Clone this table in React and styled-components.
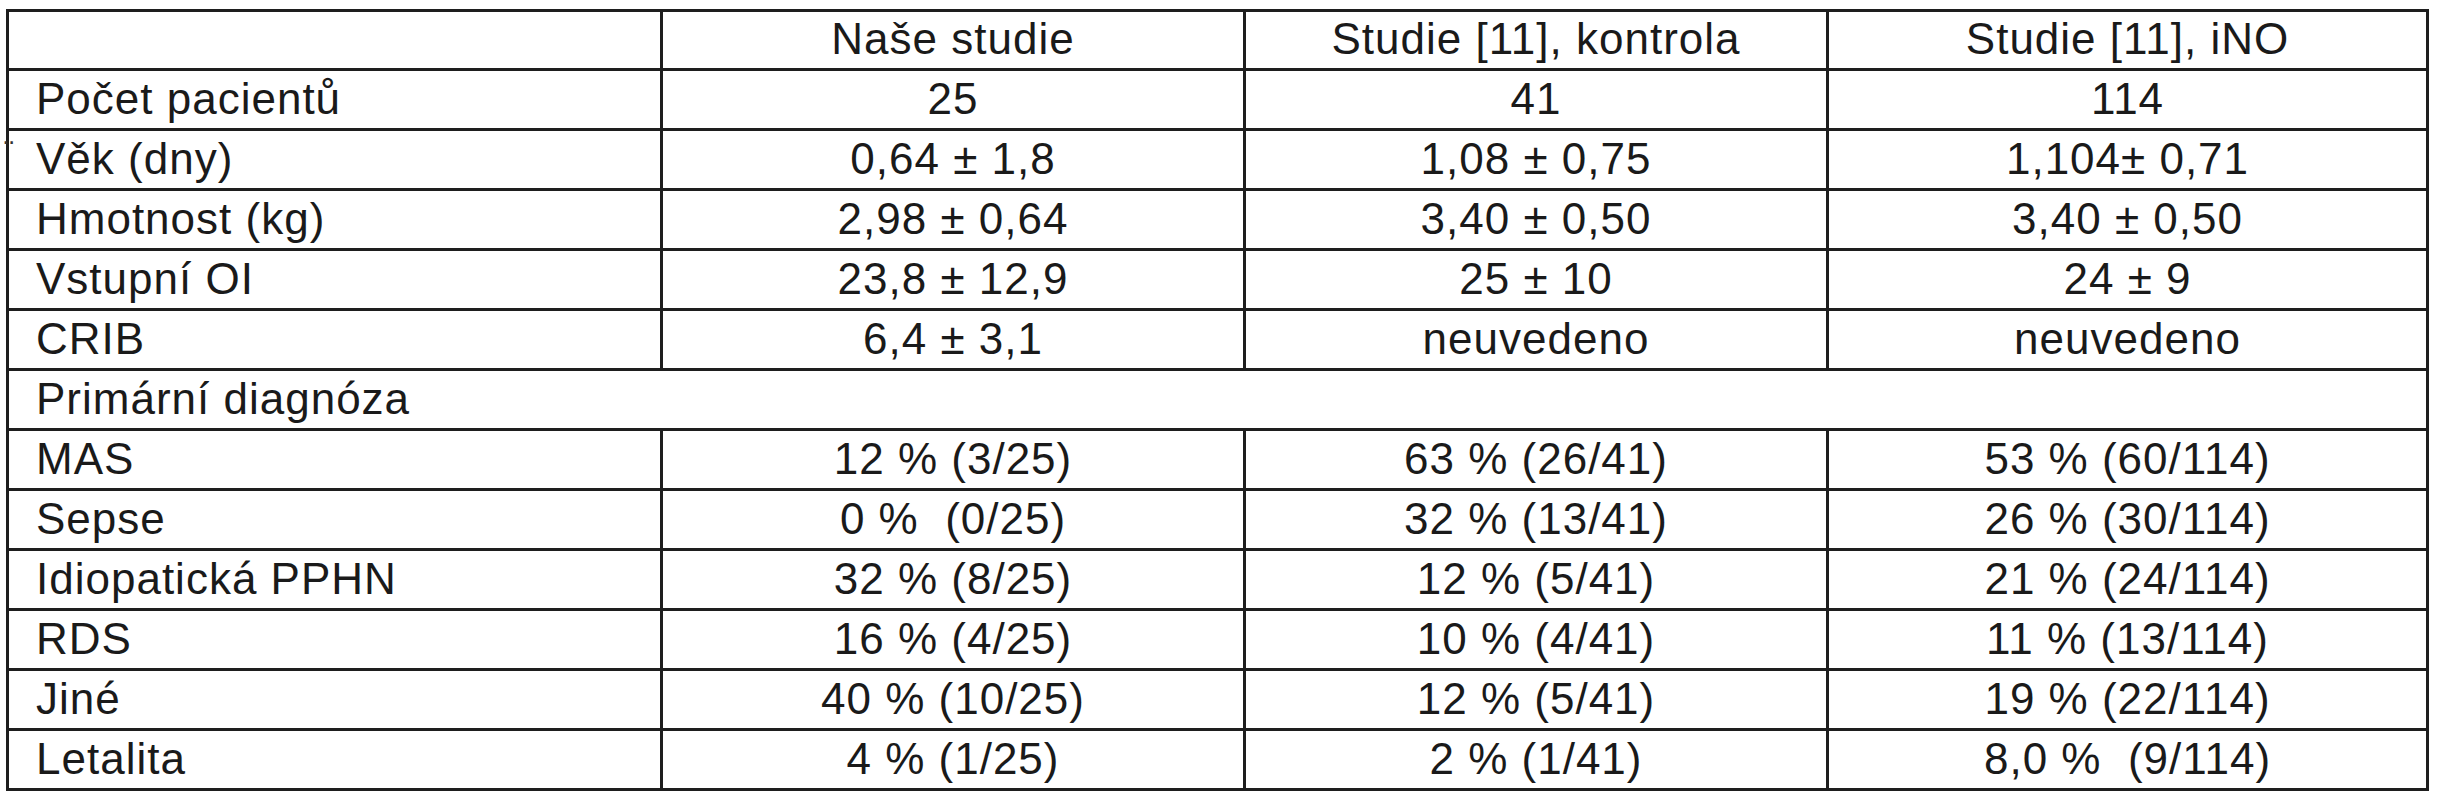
import React from "react";
import styled, { createGlobalStyle } from "styled-components";

const Global = createGlobalStyle`
  html, body { margin: 0; padding: 0; background: #ffffff; }
  body { font-family: "Liberation Sans", Arial, sans-serif; }
`;

const Page = styled.div`
  padding: 9px 0 0 6px;
`;

const Table = styled.table`
  border-collapse: collapse;
  table-layout: fixed;
  width: 2420px;
  color: #1a1a1a;
  font-family: "Liberation Sans", Arial, sans-serif;
  font-size: 44px;
  letter-spacing: 1px;
`;

const Row = styled.tr`
  height: ${(p) => (p.$header ? 59 : 60)}px;
`;

const Cell = styled.td`
  position: relative;
  border: 3px solid #1e1e1e;
  padding: 0 4px 2px;
  padding-left: ${(p) => (p.$label ? "27px" : "4px")};
  text-align: ${(p) => (p.$label ? "left" : "center")};
  font-weight: 400;
  white-space: pre;
  vertical-align: middle;
  line-height: 1;
  &::after {
    content: "";
    display: ${(p) => (p.$tick ? "block" : "none")};
    position: absolute;
    right: -3px;
    bottom: -7px;
    width: 3px;
    height: 5px;
    background: #1e1e1e;
  }
`;

const StrayMark = styled.span`
  position: absolute;
  left: -5px;
  top: 6px;
  font-size: 30px;
  line-height: 1;
  color: #333333;
`;

const headers = ["", "Naše studie", "Studie [11], kontrola", "Studie [11], iNO"];

const rows = [
  ["Počet pacientů", "25", "41", "114"],
  ["Věk (dny)", "0,64 ± 1,8", "1,08 ± 0,75", "1,104± 0,71"],
  ["Hmotnost (kg)", "2,98 ± 0,64", "3,40 ± 0,50", "3,40 ± 0,50"],
  ["Vstupní OI", "23,8 ± 12,9", "25 ± 10", "24 ± 9"],
  ["CRIB", "6,4 ± 3,1", "neuvedeno", "neuvedeno"],
  ["Primární diagnóza"],
  ["MAS", "12 % (3/25)", "63 % (26/41)", "53 % (60/114)"],
  ["Sepse", "0 %  (0/25)", "32 % (13/41)", "26 % (30/114)"],
  ["Idiopatická PPHN", "32 % (8/25)", "12 % (5/41)", "21 % (24/114)"],
  ["RDS", "16 % (4/25)", "10 % (4/41)", "11 % (13/114)"],
  ["Jiné", "40 % (10/25)", "12 % (5/41)", "19 % (22/114)"],
  ["Letalita", "4 % (1/25)", "2 % (1/41)", "8,0 %  (9/114)"],
];

export default function App() {
  return (
    <>
      <Global />
      <Page>
        <Table>
          <colgroup>
            <col style={{ width: 654 }} />
            <col style={{ width: 583 }} />
            <col style={{ width: 583 }} />
            <col style={{ width: 600 }} />
          </colgroup>
          <thead>
            <Row $header>
              {headers.map((h, i) => (
                <Cell key={i} as="th" $label={i === 0}>
                  {h}
                </Cell>
              ))}
            </Row>
          </thead>
          <tbody>
            {rows.map((r, i) => {
              const last = i === rows.length - 1;
              if (r.length === 1) {
                return (
                  <Row key={i}>
                    <Cell $label colSpan={4}>{r[0]}</Cell>
                  </Row>
                );
              }
              return (
                <Row key={i}>
                  <Cell $label $tick={last}>
                    {i === 1 && <StrayMark>¨</StrayMark>}
                    {r[0]}
                  </Cell>
                  <Cell>{r[1]}</Cell>
                  <Cell $tick={last}>{r[2]}</Cell>
                  <Cell>{r[3]}</Cell>
                </Row>
              );
            })}
          </tbody>
        </Table>
      </Page>
    </>
  );
}
